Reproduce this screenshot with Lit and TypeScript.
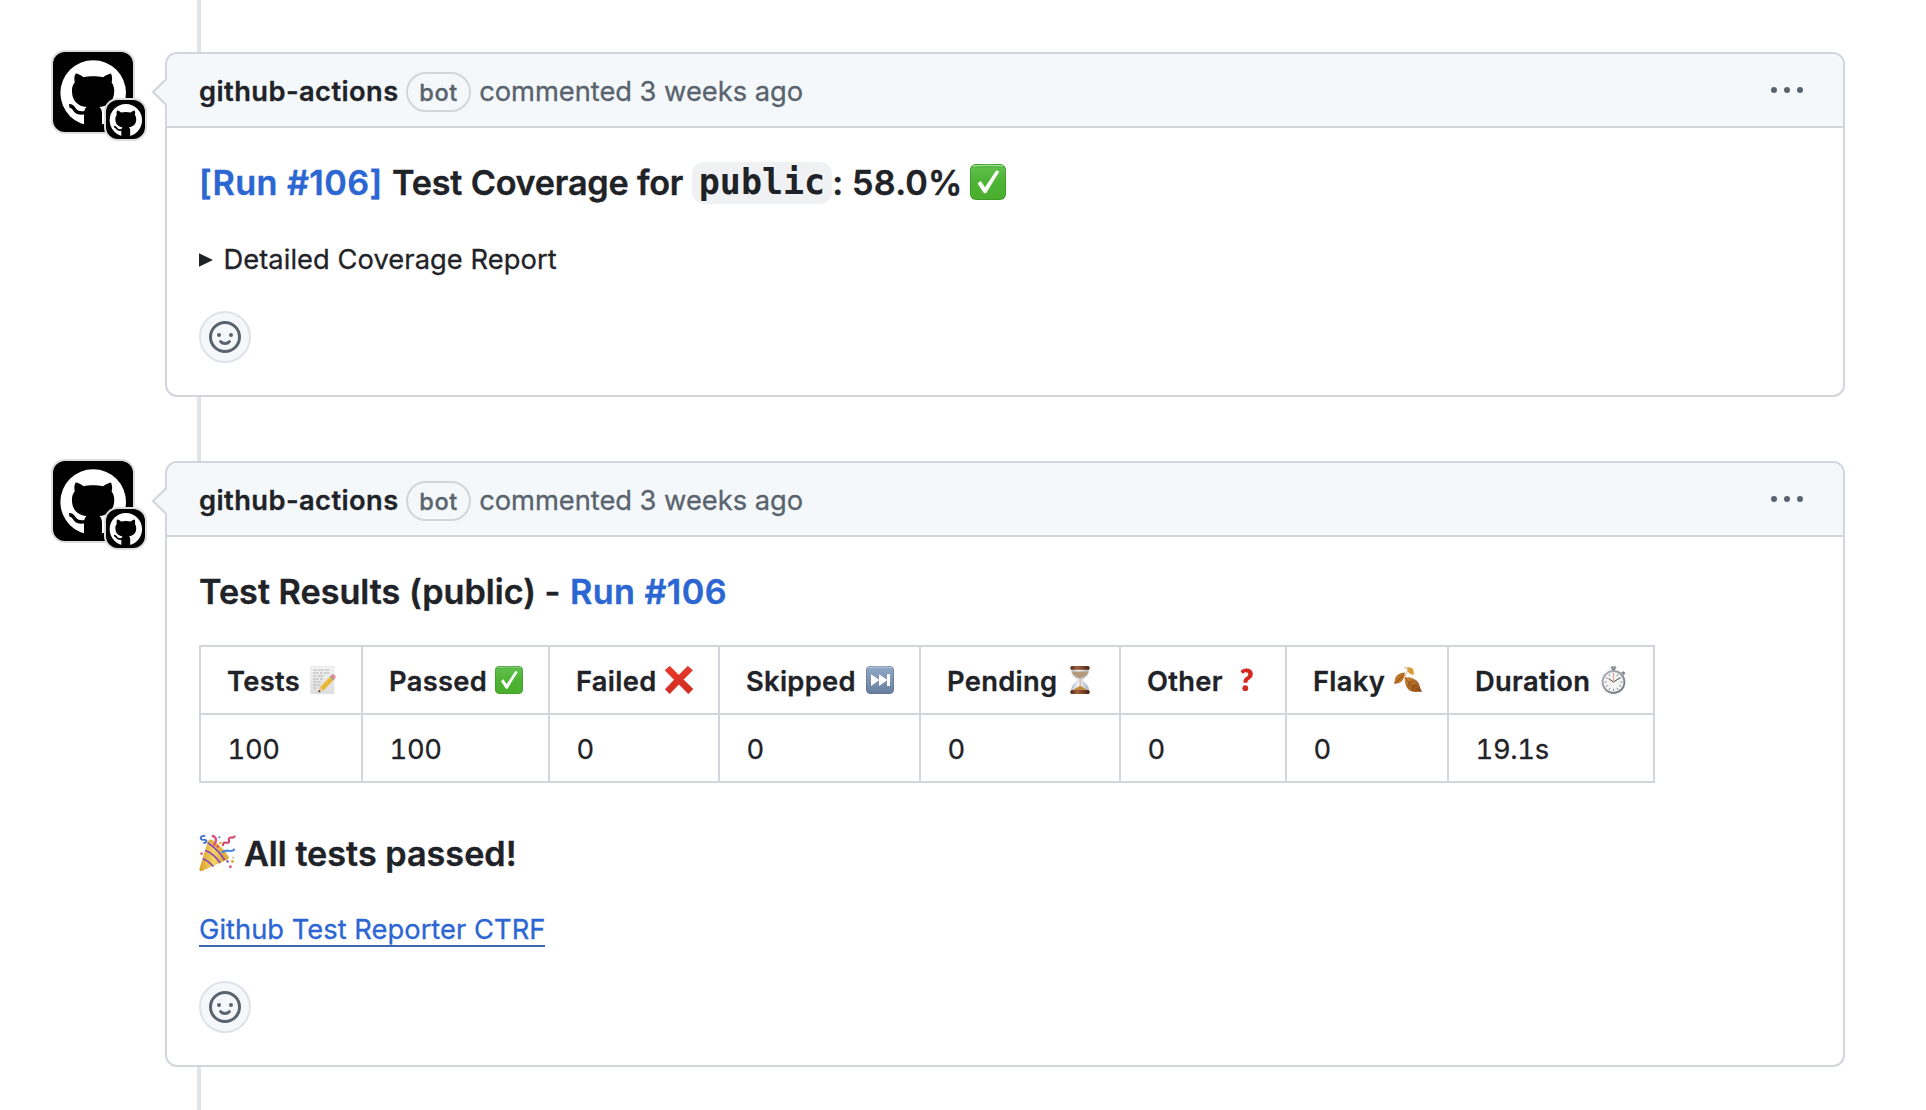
import { LitElement, html, svg, css, TemplateResult } from "lit";
import { customElement, property } from "lit/decorators.js";

type Glyph = "memo" | "check" | "cross" | "next" | "hourglass" | "question" | "leaf" | "stopwatch" | "party";

const dialTicks = [0, 30, 60, 90, 120, 150, 180, 210, 240, 270, 300, 330];

const glyphs: Record<Glyph, TemplateResult> = {
  memo: svg`
    <defs>
      <linearGradient id="paper" x1="0" y1="0" x2="0" y2="1"><stop offset="0" stop-color="#f4f4f4"/><stop offset="1" stop-color="#dcdddf"/></linearGradient>
      <linearGradient id="pencil" x1="0" y1="0" x2="1" y2="1"><stop offset="0" stop-color="#ffe06a"/><stop offset="1" stop-color="#d99a1c"/></linearGradient>
    </defs>
    <rect x="2.6" y="0.3" width="23.4" height="27.4" fill="url(#paper)" stroke="#d6d7d9" stroke-width=".4"/>
    <path d="M5.5 4h4m1 0h6m1 0h4M5 7h6m1 0h3m1 0h6M5.5 10h3m1.5 0h6M5 13h6m1 0h3M5.5 16h4m1 0h3M5 19h4m1 0h1.5M5.5 22h3" stroke="#a2a2a4" stroke-width=".9" fill="none" stroke-dasharray="2.2 .6"/>
    <path d="M10.8 25.6 12.2 20.6 22.6 9.8 26.4 13.2 15.8 24.2Z" fill="url(#pencil)"/>
    <path d="M13.9 22.4 24.4 11.4" stroke="#d89f2a" stroke-width=".8"/>
    <path d="M10.4 26.2 12 20.8 15.8 24.2Z" fill="#e9c99a"/>
    <path d="M10.2 26.6 10.9 24 12.8 25.6Z" fill="#333"/>
    <path d="M21.6 10.8 22.9 9.5 26.6 13 25.4 14.2Z" fill="#9aa3b0"/>
    <path d="M22.8 9.6 24 8.4c1.2-.8 4.2 1.6 3.6 3.4l-1.200 1.200Z" fill="#ea8495"/>`,
  check: svg`
    <defs>
      <linearGradient id="green" x1="0" y1="0" x2="0" y2="1"><stop offset="0" stop-color="#3fa52e"/><stop offset=".12" stop-color="#5fbf4a"/><stop offset=".45" stop-color="#4fb436"/><stop offset="1" stop-color="#49ae2a"/></linearGradient>
    </defs>
    <rect x="0" y="0" width="28" height="28" rx="4.6" fill="#3a9327"/>
    <rect x=".5" y=".4" width="27" height="27" rx="4.2" fill="url(#green)"/>
    <path d="M2 1.7c1-.8 23-.8 24 0" stroke="#a5df98" stroke-width=".9" fill="none"/>
    <path d="M6.2 15.2 8.2 13.4 11.7 18.4 20.5 5.3 22.4 6.1 12.4 22.5 11 22.5Z" fill="#fff" stroke="#fff" stroke-width=".5" stroke-linejoin="round"/>`,
  cross: svg`
    <defs><linearGradient id="red" x1="0" y1="0" x2="0" y2="1"><stop offset="0" stop-color="#e8392b"/><stop offset="1" stop-color="#cf2d20"/></linearGradient></defs>
    <path d="M0 4.3 4.800.2 13.8 9.3 22.800.2 27.6 4.3 18.3 13.6 28 23 23.3 27.8 13.9 18.2 4.7 27.800.3 23.3 9.3 13.8Z" fill="url(#red)" stroke="#d63226" stroke-width=".6" stroke-linejoin="round"/>`,
  next: svg`
    <defs><linearGradient id="steel" x1="0" y1="0" x2="0" y2="1"><stop offset="0" stop-color="#90a7c4"/><stop offset=".5" stop-color="#7e96b4"/><stop offset="1" stop-color="#667f9f"/></linearGradient></defs>
    <rect x="0" y="0" width="28" height="28" rx="4.6" fill="#5a7191"/>
    <rect x=".5" y=".4" width="27" height="27" rx="4.2" fill="url(#steel)"/>
    <path d="M2 1.7c1-.8 23-.8 24 0" stroke="#c3d0e0" stroke-width=".9" fill="none"/>
    <path d="M5 8.2 13.4 14 5 20ZM13 8.2 21.4 14 13 20ZM21 8.2h3v11.8h-3Z" fill="#fff"/>`,
  hourglass: svg`
    <defs>
      <linearGradient id="wood" x1="0" y1="0" x2="1" y2="0"><stop offset="0" stop-color="#4b2718"/><stop offset=".35" stop-color="#a5623c"/><stop offset="1" stop-color="#43200f"/></linearGradient>
      <linearGradient id="glass" x1="0" y1="0" x2="1" y2="0"><stop offset="0" stop-color="#b9c0c9"/><stop offset=".4" stop-color="#f3f5f7"/><stop offset="1" stop-color="#aeb6c2"/></linearGradient>
    </defs>
    <path d="M5.6 3.5h17c.3 5-2.6 7.5-7 10.7 4.4 3.3 7.3 6 7 10.3h-17c-.3-4.3 2.6-7 7-10.3-4.4-3.2-7.3-5.7-7-10.7Z" fill="url(#glass)" stroke="#a9b0ba" stroke-width=".5"/>
    <path d="M6.2 5.6h15.8c-.4 3.3-3 5-7.9 7.4-4.9-2.4-7.5-4.1-7.9-7.4Z" fill="#b39a7a"/>
    <path d="M8 24c1.500-1.700 4.600-3.700 6.100-3.900 1.500.2 4.600 2.200 6.100 3.900Z" fill="#c2873d"/>
    <path d="M14.1 13v8" stroke="#c39a62" stroke-width=".8"/>
    <rect x="4.4" y="0" width="19.2" height="3.8" rx="1.6" fill="url(#wood)"/>
    <rect x="4.4" y="24" width="19.2" height="4" rx="1.6" fill="url(#wood)"/>`,
  question: svg`
    <path d="M8.6 5.2C9.7 3.4 11.8 2.6 14.3 2.6c3.8 0 6.5 2 6.5 5.4 0 2.6-1.3 4-3.4 5.4-1.5 1-2 1.7-2 3.3h-4c-.1-3 .8-4.4 2.9-5.8 1.4-1 2-1.6 2-2.7 0-1.200-.9-2-2.4-2-1.4 0-2.300.6-3 1.7Z" fill="#d42a20"/>
    <ellipse cx="13.3" cy="22.2" rx="2.9" ry="2.9" fill="#cf2a20"/>`,
  leaf: svg`
    <defs>
      <linearGradient id="brown" x1="0" y1="0" x2="1" y2="1"><stop offset="0" stop-color="#cf8a3c"/><stop offset="1" stop-color="#8f4a14"/></linearGradient>
    </defs>
    <path d="M10.8 11.4c5.2-.6 11.4 1.5 13.5 5.2 1.4 2.7 1.7 5.7 3.7 9.2-3.4-.2-7.400.7-10.8-.6-4.9-2-6.8-8.3-6.4-13.8Z" fill="url(#brown)"/>
    <path d="M10.8 11.4C15 17 20 22 27.6 25.6M15 16.5l5-1.5M18 20l5.500-1M14.5 16l.5 5M18 19.8l1 4.5" stroke="#70370c" stroke-width=".5" fill="none"/>
    <path d="M10.6 6.4C6 6.6 2.6 8.7 1.3 12.200.8 14 .8 15.8 0 17.6c2.600.3 5.500-.3 7.400-2.100 2.400-2.400 3.600-5.600 3.200-9.100Z" fill="#bd7328"/>
    <path d="M10.4 6.8C8 11 4.5 14.500.4 17.4" stroke="#70370c" stroke-width=".5" fill="none"/>
    <path d="M13.2 1.4c2.400-.4 5 .4 6 2.200.5 1.500.3 3.300 1.100 5-2.200.2-4.300-.3-5.500-1.800-1.200-1.600-1.700-3.400-1.600-5.400Z" fill="#dc9a38"/>
    <path d="M10.2 1.6c1.600.4 3 .2 4 1.4-.6 3.5-3 3.5-3.4 8.4" stroke="#d7a866" stroke-width="1" fill="none"/>`,
  stopwatch: svg`
    <defs><linearGradient id="rim" x1="0" y1="0" x2="1" y2="1"><stop offset="0" stop-color="#b6bac0"/><stop offset="1" stop-color="#6d7178"/></linearGradient></defs>
    <rect x="10.8" y=".2" width="5.4" height="3" rx="1" fill="#989ca3"/>
    <rect x="12" y="2.6" width="3" height="2.6" fill="#7d8188"/>
    <path d="m21 6.5 2.200-1.200 2.400 1.800-1.800 2Z" fill="#83878e"/>
    <circle cx="13.5" cy="16" r="11.9" fill="url(#rim)"/>
    <circle cx="13.5" cy="16" r="10" fill="#f4f4f5"/>
    ${dialTicks.map(a => svg`<path d="M13.5 7v2.2" stroke="#77797e" stroke-width=".8" transform="rotate(${a} 13.5 16)"/>`)}
    <path d="M8.6 12.6 13.5 16 20 11.8" stroke="#444" stroke-width="1" fill="none"/>
    <path d="M13.5 7.5V17" stroke="#e39a86" stroke-width=".9"/>`,
  party: svg`
    <defs><linearGradient id="cone" x1="0" y1="0" x2="1" y2="0"><stop offset="0" stop-color="#d9a02c"/><stop offset=".5" stop-color="#f6d766"/><stop offset="1" stop-color="#cf9125"/></linearGradient></defs>
    <path d="M6.8 4.8 9.6 3.6C14 6 19.5 11 23 17.2l-.4 1.7L2.4 28c-1.600.4-2.400-.5-2-2Z" fill="url(#cone)"/>
    <path d="M7.3 5.4c5 2 11 8 14.5 13.5 1-.3 1.600-1 1.200-1.700C20 11.5 14.5 6 9.6 3.6 8 3.2 7 4 7.3 5.4Z" fill="#e2b23f"/>
    <path d="M4.8 11.8C9 13.5 14 18 16.6 21.8M3 18.2c3 1.3 6.600 4.300 8.400 6.300M6.8 6c4.500 3 10 8 13 13.5" stroke="#8a4bb5" stroke-width="1.3" fill="none"/>
    <path d="M4.800.8C1.200.2.4 3 2.4 3.6c2.200.6 3-.4 3.400 1 .2 1.200-1 1.600-2.400 1.6" stroke="#3f6fca" stroke-width="1.5" fill="none"/>
    <path d="M10 .6c2 .4 3.200 1.600 3.200 3.400 0 2-1.600 2.400-1.200 4.4" stroke="#e0557f" stroke-width="1.9" fill="none"/>
    <path d="M18.8 8.6c-.6-2 .6-3 2.400-2.600 2 .4 2.600-.6 2-2.200-.4-1.600 1-2.200 2.600-1.800 1.400.2 2-.6 1.900-1.6" stroke="#cf4468" stroke-width="1.6" fill="none"/>
    <path d="M17.6 13.6c2.600-2.200 5-1.600 6.600-1.200 1.600.2 2.600-.4 3.600-1.4" stroke="#4a8bdc" stroke-width="1.7" fill="none"/>
    <circle cx="15.8" cy="1.8" r=".9" fill="#5b8fdc"/><circle cx="16.6" cy="6.2" r="1" fill="#e8b43c"/>
    <circle cx="2" cy="14.5" r="1" fill="#e0557f"/><circle cx="14.5" cy="9" r="1" fill="#d84f6e"/>
    <circle cx="22.2" cy="20.6" r="1" fill="#6f5bc0"/><circle cx="26" cy="20.6" r="1.1" fill="#e0a03a"/>
    <circle cx="24.4" cy="24.6" r="1.2" fill="#dd7088"/><circle cx="26.6" cy="17.6" r=".7" fill="#d8a860"/>`,
};

@customElement("emoji-glyph")
class EmojiGlyph extends LitElement {
  static styles = css`
    :host { display: block; flex: none; width: 28px; height: 28px; }
    .art { display: block; width: 100%; height: 100%; overflow: visible; }
  `;
  @property() name: Glyph = "check";
  render() {
    return html`<svg class="art" viewBox="0 0 28 28">${glyphs[this.name]}</svg>`;
  }
}

@customElement("cat-mark")
class CatMark extends LitElement {
  static styles = css`
    :host { display: block; background: #000; border-radius: 12px; overflow: hidden; box-shadow: 0 0 0 2px #dcdddd; }
    .mark { display: block; width: 100%; height: 100%; }
  `;
  render() {
    return html`<svg class="mark" viewBox="0 0 80 80">
      <circle cx="40.2" cy="41" r="32.8" fill="#fff"/>
      <path d="M22.7 21.5C25 21.5 28 23.3 30.5 25.2 36 23.8 44 23.8 50 25.2 53 23.3 56 21.7 58 21.5 59.5 25 59.3 28 58.6 30.2 60.6 33 61.5 36.5 61.2 40 61 49 55 54.3 46.5 55 48.5 57 49 59 49 62V76H31V62C31 59 31.5 57 33.5 55 25 54.3 19.3 49 19 40 18.7 36 19.5 33 21.8 30.2 21 27 21.2 24 22.7 21.5Z"/>
      <path d="M16.2 53.8C19.5 53.6 20.5 56 22.2 58.4 24.5 61.3 28 61.3 32 60.6" fill="none" stroke="#000" stroke-width="3.4"/>
    </svg>`;
  }
}

@customElement("comment-card")
class CommentCard extends LitElement {
  static styles = css`
    :host { display: flex; position: relative; }
    .avatar { position: relative; flex: none; width: 80px; height: 80px; margin-right: 32px; }
    .large { width: 80px; height: 80px; }
    .small { position: absolute; left: 52.5px; top: 47.5px; width: 39.5px; height: 39.5px; }
    .card { position: relative; box-sizing: border-box; width: 1680px; border: 2px solid #d2d6dc; border-radius: 12px; background: #fff; }
    .tip { position: absolute; left: -17px; top: 23px; width: 18px; height: 30px; }
    .head { display: flex; align-items: center; height: 72px; padding: 0 40px 0 32px; border-bottom: 2px solid #d2d6dc; border-radius: 10px 10px 0 0; background: #f4f8fa; color: #59636e; white-space: nowrap; }
    .author { padding-top: 3px; color: #1f2328; font-weight: 600; letter-spacing: .42px; }
    .bot { box-sizing: border-box; display: flex; align-items: center; justify-content: center; width: 65px; height: 40px; margin: 4px 8px 0 7.5px; border: 2px solid #d2d6dc; border-radius: 20px; font-size: 23.5px; font-weight: 500; letter-spacing: .7px; }
    .when { flex: 1; padding-top: 3px; letter-spacing: -.03px; }
    .dots { width: 32px; height: 6px; fill: #59636e; }
    .body { display: flex; flex-direction: column; align-items: flex-start; padding: 32px 32px 0; }
    .react { box-sizing: border-box; display: flex; align-items: center; justify-content: center; width: 52px; height: 52px; margin: 31px 0 32px; border: 2px solid #dfe3e8; border-radius: 50%; background: #f4f8fa; }
    .smile { width: 32px; height: 32px; fill: none; stroke: #59636e; stroke-width: 1.5; stroke-linecap: round; }
    .eye { fill: #59636e; stroke: none; }
  `;
  render() {
    return html`
      <div class="avatar">
        <cat-mark class="large"></cat-mark>
        <cat-mark class="small"></cat-mark>
      </div>
      <div class="card">
        <div class="head">
          <span class="author">github-actions</span>
          <span class="bot">bot</span>
          <span class="when">commented 3 weeks ago</span>
          <svg class="dots" viewBox="0 0 32 6"><circle cx="3" cy="3" r="3"/><circle cx="16" cy="3" r="3"/><circle cx="29" cy="3" r="3"/></svg>
        </div>
        <svg class="tip" viewBox="0 0 18 30">
          <path d="M18 1 3 15 18 29Z" fill="#f4f8fa"/>
          <path d="M16.4 2 3 15 16.400 28" fill="none" stroke="#d2d6dc" stroke-width="2.2"/>
        </svg>
        <div class="body">
          <slot></slot>
          <div class="react">
            <svg class="smile" viewBox="0 0 16 16">
              <circle cx="8" cy="8" r="7.25"/>
              <circle class="eye" cx="5" cy="7" r="1"/>
              <circle class="eye" cx="11" cy="7" r="1"/>
              <path d="M5.75 10.25C6.25 10.85 7.05 11.25 8 11.25s1.750-.4 2.250-1" stroke-width="1.4"/>
            </svg>
          </div>
        </div>
      </div>`;
  }
}

const columns: { label: string; glyph: Glyph; value: string }[] = [
  { label: "Tests", glyph: "memo", value: "100" },
  { label: "Passed", glyph: "check", value: "100" },
  { label: "Failed", glyph: "cross", value: "0" },
  { label: "Skipped", glyph: "next", value: "0" },
  { label: "Pending", glyph: "hourglass", value: "0" },
  { label: "Other", glyph: "question", value: "0" },
  { label: "Flaky", glyph: "leaf", value: "0" },
  { label: "Duration", glyph: "stopwatch", value: "19.1s" },
];

@customElement("app-root")
class AppRoot extends LitElement {
  static styles = css`
    :host { display: block; font-family: Inter, "Liberation Sans", sans-serif; font-size: 27.3px; letter-spacing: .06px; color: #1f2328; -webkit-text-stroke: .3px currentColor; }
    .page { position: relative; box-sizing: border-box; display: flex; flex-direction: column; gap: 64px; height: 1110px; padding: 52px 0 0 53px; overflow: hidden; background: #fff; }
    .page::before { content: ""; position: absolute; left: 197px; top: 0; bottom: 0; width: 4px; background: #e0e3e8; }
    .title { display: flex; align-items: center; height: 44px; margin: 0; font-size: 34.2px; font-weight: 600; letter-spacing: 0; white-space: pre; -webkit-text-stroke-width: .4px; }
    .link { color: #2b66d3; text-decoration: none; }
    .run { letter-spacing: .4px; }
    .cover { margin-left: 9.5px; letter-spacing: -.2px; }
    .chip { box-sizing: border-box; height: 42px; margin: 2px 0 0 8.5px; padding: 0 7px; border-radius: 12px; background: #eff1f2; font: 700 35px/41px "DejaVu Sans Mono", monospace; letter-spacing: 0; -webkit-text-stroke-width: 0; }
    .rate { min-width: 138px; letter-spacing: .2px; }
    .name { margin-right: 1px; }
    .big { width: 36px; height: 36px; }
    .details { display: flex; align-items: center; gap: 10.5px; height: 42px; margin-top: 34px; }
    .arrow { width: 14px; height: 14px; margin-top: 2px; fill: #1f2328; }
    .grid { display: grid; grid-template-columns: 162px 187px 170px 201px 200px 166px 162px 206px; grid-auto-rows: 68px; margin-top: 32px; border: solid #d2d6dc; border-width: 0 2px 2px 0; font-variant-numeric: tabular-nums; }
    .cell { display: flex; align-items: center; justify-content: space-between; padding: 0 25.5px 0 26px; border: solid #d2d6dc; border-width: 2px 0 0 2px; }
    .label { padding-top: 2px; font-weight: 600; letter-spacing: .3px; }
    .value { padding: 2px 0 0 .5px; letter-spacing: -.3px; }
    .passed { gap: 9px; margin-top: 48px; }
    .reporter { display: flex; align-items: center; height: 42px; margin-top: 33px; }
    .under { box-sizing: border-box; height: 36px; line-height: 37px; border-bottom: 2px solid #3f66b0; letter-spacing: .03px; }
  `;
  render() {
    return html`
      <div class="page">
        <comment-card>
          <h3 class="title"><a class="link run">[Run #106]</a><span class="cover">Test Coverage for</span><code class="chip">public</code><span class="rate">: 58.0%</span><emoji-glyph class="big" name="check"></emoji-glyph></h3>
          <div class="details">
            <svg class="arrow" viewBox="0 0 14 14"><path d="M0 .3 14 7 0 13.7Z"/></svg>
            <span>Detailed Coverage Report</span>
          </div>
        </comment-card>
        <comment-card>
          <h3 class="title"><span class="name">Test Results (public) - </span><a class="link run">Run #106</a></h3>
          <div class="grid">
            ${columns.map(c => html`<div class="cell"><span class="label">${c.label}</span><emoji-glyph name=${c.glyph}></emoji-glyph></div>`)}
            ${columns.map(c => html`<div class="cell"><span class="value">${c.value}</span></div>`)}
          </div>
          <h3 class="title passed"><emoji-glyph class="big" name="party"></emoji-glyph><span>All tests passed!</span></h3>
          <div class="reporter"><a class="link under">Github Test Reporter CTRF</a></div>
        </comment-card>
      </div>`;
  }
}
